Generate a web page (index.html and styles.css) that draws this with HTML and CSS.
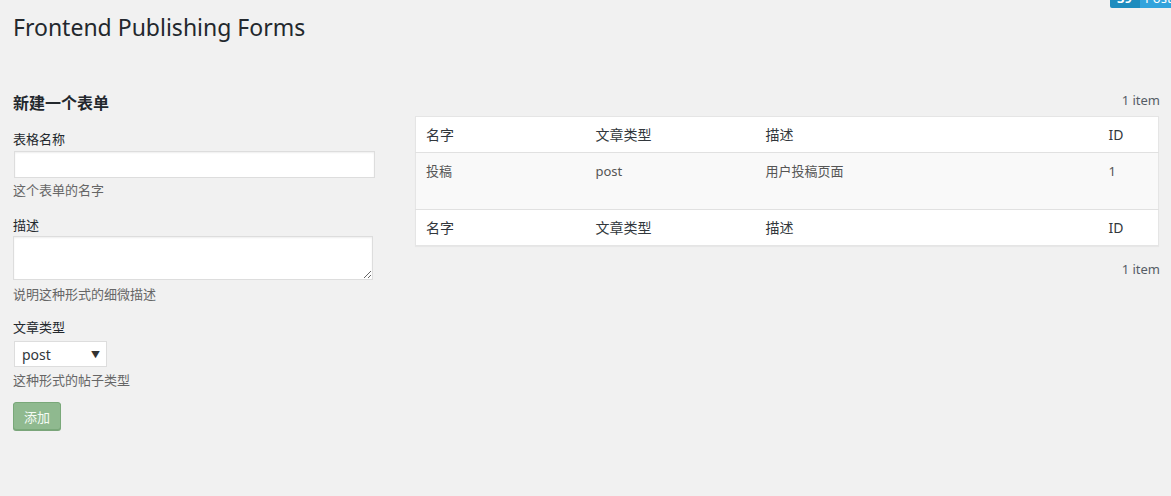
FILE: index.html
```html
<!DOCTYPE html>
<html lang="zh-CN">
<head>
<meta charset="utf-8">
<title>Frontend Publishing Forms</title>
<link rel="stylesheet" href="styles.css">
</head>
<body>
<div class="badge"><span class="badge-num">39</span><span class="badge-txt">Posts</span></div>
<div class="wrap">
  <h1 class="page-title">Frontend Publishing Forms</h1>
  <div class="cols">
    <div class="col-left">
      <h2 class="form-title">新建一个表单</h2>
      <div class="field">
        <label class="label">表格名称</label>
        <input class="text-input" type="text">
        <p class="help help-input">这个表单的名字</p>
      </div>
      <div class="field field-desc">
        <label class="label">描述</label>
        <textarea class="text-area"></textarea>
        <p class="help help-area">说明这种形式的细微描述</p>
      </div>
      <div class="field field-type">
        <label class="label">文章类型</label>
        <div class="select"><span>post</span><span class="caret">▼</span></div>
        <p class="help help-select">这种形式的帖子类型</p>
      </div>
      <button class="btn">添加</button>
    </div>
    <div class="col-right">
      <div class="count count-top">1 item</div>
      <table class="list">
        <thead>
          <tr><th class="c1">名字</th><th class="c2">文章类型</th><th class="c3">描述</th><th class="c4">ID</th></tr>
        </thead>
        <tbody>
          <tr><td>投稿</td><td>post</td><td>用户投稿页面</td><td>1</td></tr>
        </tbody>
        <tfoot>
          <tr><th>名字</th><th>文章类型</th><th>描述</th><th>ID</th></tr>
        </tfoot>
      </table>
      <div class="count count-bottom">1 item</div>
    </div>
  </div>
</div>
</body>
</html>
```
FILE: styles.css
```css
* { box-sizing: border-box; }
html, body { margin: 0; padding: 0; }
body {
  background: #f1f1f1;
  color: #23282d;
  font-family: "Noto Sans", "Noto Sans CJK SC", sans-serif;
  font-size: 13px;
  width: 1171px;
  height: 496px;
  overflow: hidden;
  position: relative;
}
.badge {
  position: absolute;
  top: -12px;
  left: 1110px;
  display: flex;
  height: 20px;
  font-size: 13px;
  line-height: 20px;
}
.badge-num {
  background: #1e8cbe;
  color: #fff;
  font-weight: bold;
  padding: 0 7px;
  border-radius: 2px 0 0 2px;
  width: 30px;
}
.badge-txt {
  background: #32a3dc;
  color: #fff;
  padding: 0 5px;
}
.wrap { padding: 0 13px; }
.page-title {
  margin: 0;
  padding: 13px 0 0;
  font-size: 23px;
  font-weight: 400;
  line-height: 29px;
  color: #23282d;
}
.cols {
  display: flex;
  gap: 42px;
  margin-top: 49px;
}
.col-left { width: 360px; flex: none; }
.col-right { flex: 1; }
.form-title {
  margin: 0;
  font-size: 16px;
  font-weight: 700;
  line-height: 24px;
  color: #23282d;
}
.field { margin-top: 15px; }
.field-desc { margin-top: 17px; }
.field-type { margin-top: 15px; }
.label {
  display: block;
  font-size: 13px;
  line-height: 18px;
  color: #23282d;
}
.text-input {
  display: block;
  width: 361px;
  height: 27px;
  margin: 3px 0 0 1px;
  border: 1px solid #ddd;
  background: #fff;
  box-shadow: inset 0 1px 2px rgba(0,0,0,.07);
}
.text-area {
  display: block;
  width: 360px;
  height: 44px;
  margin: 2px 0 0 0;
  border: 1px solid #ddd;
  background: #fff;
  box-shadow: inset 0 1px 2px rgba(0,0,0,.07);
  resize: both;
}
.help {
  margin: 6px 0 0;
  font-size: 13px;
  line-height: 18px;
  color: #666;
}
.help-input { margin-top: 3px; }
.help-area { margin-top: 5px; }
.select {
  display: flex;
  justify-content: space-between;
  align-items: center;
  width: 93px;
  height: 26px;
  margin: 5px 0 0 1px;
  padding: 0 6px 0 7px;
  background: #fff;
  border: 1px solid #ddd;
  font-size: 14px;
  color: #32373c;
}
.caret { font-size: 9px; color: #333; }
.help-select { margin-top: 4px; }
.btn {
  display: block;
  margin-top: 13px;
  width: 48px;
  height: 28px;
  padding: 0;
  background: #8fb98f;
  border: 1px solid #79a879;
  border-radius: 3px;
  color: #f4fbf4;
  font-family: "Noto Sans CJK SC", sans-serif;
  font-size: 13px;
  box-shadow: 0 1px 0 #7aa57a;
}
.count {
  text-align: right;
  font-size: 13px;
  line-height: 18px;
  color: #555d66;
  height: 18px;
  margin-right: -1px;
}
.count-top { margin-bottom: 7px; }
.count-bottom { margin-top: 14px; }
.list {
  width: 744px;
  border-collapse: collapse;
  background: #fff;
  border: 1px solid #e5e5e5;
  box-shadow: 0 1px 1px rgba(0,0,0,.04);
}
.list th, .list td {
  text-align: left;
  font-weight: 400;
  padding: 0 10px;
  vertical-align: top;
}
.list th { font-size: 14px; color: #32373c; height: 35px; line-height: 35px; }
.list thead th { border-bottom: 1px solid #e1e1e1; }
.list tfoot th { border-top: 1px solid #e1e1e1; }
.list td { font-size: 13px; color: #555; background: #f9f9f9; height: 57px; padding-top: 9px; line-height: 18px; }
.c1 { width: 170px; }
.c2 { width: 170px; }
.c3 { width: 343px; }
.c4 { width: auto; }
```
